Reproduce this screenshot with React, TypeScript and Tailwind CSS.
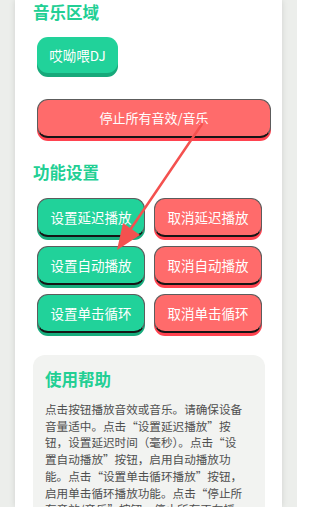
const GREEN_BTN =
  'h-[39px] rounded-[11px] bg-[#21d29a] text-white text-[13.5px] border-[1.5px] border-[#5c5c5c] border-b-2 border-b-[#151515] shadow-[0_3px_0_#17ab7c] flex items-center justify-center';
const RED_BTN =
  'h-[39px] rounded-[11px] bg-[#ff6b6b] text-white text-[13.5px] border-[1.5px] border-[#5c5c5c] border-b-2 border-b-[#151515] shadow-[0_3px_0_#ff4350] flex items-center justify-center';

const HELP_TEXT =
  '点击按钮播放音效或音乐。请确保设备音量适中。点击“设置延迟播放”按钮，设置延迟时间（毫秒）。点击“设置自动播放”按钮，启用自动播放功能。点击“设置单击循环播放”按钮，启用单击循环播放功能。点击“停止所有音效/音乐”按钮，停止所有正在播放的音效和音乐。';

export default function App() {
  return (
    <div
      className="relative h-[507px] w-[297px] overflow-hidden bg-[#eceeeb]"
      style={{ fontFamily: '"Noto Sans CJK SC", "Noto Sans", sans-serif' }}
    >
      {/* 白色卡片 */}
      <div className="ml-[15px] h-full w-[267px] bg-white px-[18px] shadow-[0_0_6px_rgba(0,0,0,0.12)]">
        <h2 className="h-[24px] text-[16.5px] font-bold leading-[24px] text-[#22cf94]">音乐区域</h2>

        <div className="ml-[4px] mt-[13px] flex h-[36px] w-[81px] items-center justify-center rounded-[11px] bg-[#21d29a] text-[13.5px] text-white shadow-[0_4px_0_#17a97a]">
          哎呦喂DJ
        </div>

        <div className={`ml-[4px] mt-[26px] w-[234px] !text-[13px] ${RED_BTN}`}>停止所有音效/音乐</div>

        <h2 className="mt-[22px] h-[24px] text-[16.5px] font-bold leading-[24px] text-[#22cf94]">功能设置</h2>

        <div className="ml-[4px] mt-[14px] grid w-[225px] grid-cols-2 gap-x-[9px] gap-y-[9px]">
          <div className={GREEN_BTN}>设置延迟播放</div>
          <div className={RED_BTN}>取消延迟播放</div>
          <div className={GREEN_BTN}>设置自动播放</div>
          <div className={RED_BTN}>取消自动播放</div>
          <div className={GREEN_BTN}>设置单击循环</div>
          <div className={RED_BTN}>取消单击循环</div>
        </div>

        {/* 使用帮助 */}
        <div className="mt-[22px] w-[232px] rounded-[12px] bg-[#f2f3f1] px-[12px] pb-4 pt-[12px]">
          <h3 className="h-[24px] text-[16.5px] font-bold leading-[24px] text-[#22cf94]">使用帮助</h3>
          <p className="mt-[10px] w-[200px] text-[11.6px] leading-[16.7px] text-[#4f4f4f]">{HELP_TEXT}</p>
        </div>
      </div>

      {/* 红色箭头 */}
      <svg className="pointer-events-none absolute left-0 top-0" width="297" height="507" viewBox="0 0 297 507">
        <line x1="202" y1="124" x2="128" y2="233" stroke="#f4514f" strokeWidth="2.5" strokeLinecap="round" />
        <polygon points="117,250 140,235 123,223" fill="#f4514f" />
      </svg>
    </div>
  );
}
